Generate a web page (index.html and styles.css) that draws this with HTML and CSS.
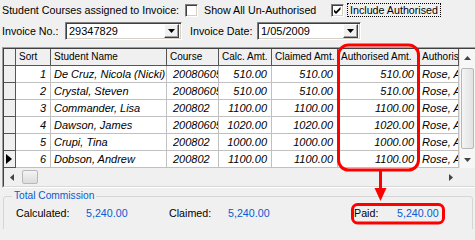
FILE: index.html
```html
<!DOCTYPE html>
<html>
<head>
<meta charset="utf-8">
<title>Student Courses</title>
<link rel="stylesheet" href="styles.css">
</head>
<body>
<div class="row1">
  <span class="title">Student Courses assigned to Invoice:</span>
  <span class="chk"></span>
  <span class="chklbl">Show All Un-Authorised</span>
  <span class="chk"><svg width="11" height="11" viewBox="0 0 11 11"><polygon points="2,4.5 4,6.5 8.5,2 8.5,4.5 4,9 2,7" fill="#000"/></svg></span>
  <span class="focus">Include Authorised</span>
</div>
<div class="row2">
  <span class="lbl lbl1">Invoice No.:</span>
  <span class="combo combo1"><span class="cval">29347829</span><span class="cbtn"><svg width="7" height="4" viewBox="0 0 7 4"><polygon points="0,0 7,0 3.5,4" fill="#000"/></svg></span></span>
  <span class="lbl lbl2">Invoice Date:</span>
  <span class="combo combo2"><span class="cval">1/05/2009</span><span class="cbtn"><svg width="7" height="4" viewBox="0 0 7 4"><polygon points="0,0 7,0 3.5,4" fill="#000"/></svg></span></span>
</div>
<div class="grid">
  <div class="gin">
    <div class="gmain">
      <div class="cells">
        <div class="hd rhh"></div><div class="hd">Sort</div><div class="hd">Student Name</div><div class="hd">Course</div><div class="hd">Calc. Amt.</div><div class="hd">Claimed Amt.</div><div class="hd">Authorised Amt.</div><div class="hd">Authorised By</div>

        <div class="rh"></div><div class="c r">1</div><div class="c l">De Cruz, Nicola (Nicki)</div><div class="c crs">20080605</div><div class="c r">510.00</div><div class="c r">510.00</div><div class="c r">510.00</div><div class="c l">Rose, Anne</div>
        <div class="rh"></div><div class="c r">2</div><div class="c l">Crystal, Steven</div><div class="c crs">20080605</div><div class="c r">510.00</div><div class="c r">510.00</div><div class="c r">510.00</div><div class="c l">Rose, Anne</div>
        <div class="rh"></div><div class="c r">3</div><div class="c l">Commander, Lisa</div><div class="c crs">200802</div><div class="c r">1100.00</div><div class="c r">1100.00</div><div class="c r">1100.00</div><div class="c l">Rose, Anne</div>
        <div class="rh"></div><div class="c r">4</div><div class="c l">Dawson, James</div><div class="c crs">20080605</div><div class="c r">1020.00</div><div class="c r">1020.00</div><div class="c r">1020.00</div><div class="c l">Rose, Anne</div>
        <div class="rh"></div><div class="c r">5</div><div class="c l">Crupi, Tina</div><div class="c crs">200802</div><div class="c r">1000.00</div><div class="c r">1000.00</div><div class="c r">1000.00</div><div class="c l">Rose, Anne</div>
        <div class="rh cur"><svg width="6" height="10" viewBox="0 0 6 10"><polygon points="0,0 6,5 0,10" fill="#000"/></svg></div><div class="c r">6</div><div class="c l">Dobson, Andrew</div><div class="c crs">200802</div><div class="c r">1100.00</div><div class="c r">1100.00</div><div class="c r">1100.00</div><div class="c l">Rose, Anne</div>
      </div>
      <div class="vs">
        <div class="sbtn"><svg width="7" height="4" viewBox="0 0 7 4"><polygon points="3.5,0 7,4 0,4" fill="#444"/></svg></div>
        <div class="vthumb"></div>
        <div class="sbtn"><svg width="7" height="4" viewBox="0 0 7 4"><polygon points="0,0 7,0 3.5,4" fill="#444"/></svg></div>
      </div>
    </div>
    <div class="hsrow">
      <div class="hs">
        <div class="hbtn"><svg width="4" height="7" viewBox="0 0 4 7"><polygon points="4,0 4,7 0,3.5" fill="#444"/></svg></div>
        <div class="hthumb"></div>
        <div class="htrack"></div>
        <div class="hbtn"><svg width="4" height="7" viewBox="0 0 4 7"><polygon points="0,0 4,3.5 0,7" fill="#444"/></svg></div>
      </div>
      <div class="corner"></div>
    </div>
  </div>
</div>
<fieldset class="totals">
  <legend>Total Commission</legend>
  <div class="tline">
    <span class="k k1">Calculated:</span><span class="v v1">5,240.00</span>
    <span class="k k2">Claimed:</span><span class="v v2">5,240.00</span>
    <span class="k k3">Paid:</span><span class="v v3">5,240.00</span>
  </div>
</fieldset>
<svg class="anno" width="475" height="229" viewBox="0 0 475 229">
  <rect x="338.5" y="45" width="80" height="125" rx="10" ry="10" fill="none" stroke="#f00" stroke-width="3"/>
  <line x1="380.5" y1="171" x2="380.5" y2="190" stroke="#f00" stroke-width="3"/>
  <polygon points="374.5,188 386.5,188 380.5,201" fill="#f00"/>
  <rect x="352.5" y="204.5" width="91" height="18.5" rx="5" ry="5" fill="none" stroke="#f00" stroke-width="3"/>
</svg>
</body>
</html>
```
FILE: styles.css
```css
* { box-sizing: border-box; }
html, body { margin: 0; padding: 0; }
body {
  width: 475px;
  height: 229px;
  overflow: hidden;
  position: relative;
  background: #f0f0f0;
  color: #000;
  font-family: "Liberation Sans", Arial, sans-serif;
  font-size: 10.7px;
}

/* top rows */
.row1 {
  display: flex;
  align-items: center;
  height: 20px;
  padding-left: 2px;
  white-space: nowrap;
}
.title { width: 183px; }
.chk {
  width: 13px;
  height: 13px;
  flex: none;
  background: #fff;
  border: 1px solid;
  border-color: #808080 #fff #fff #808080;
  box-shadow: inset 1px 1px 0 #404040, inset -1px -1px 0 #d4d0c8;
  display: flex;
  align-items: center;
  justify-content: center;
}
.chk svg { display: block; }
.chklbl { width: 127px; margin-left: 6px; }
.focus {
  margin-left: 3px;
  padding: 0 2px;
  height: 14px;
  line-height: 12px;
  border: 1px dotted #000;
}

.row2 {
  display: flex;
  align-items: center;
  height: 18px;
  margin-top: 2px;
  padding-left: 2px;
  white-space: nowrap;
}
.lbl1 { width: 63px; }
.lbl2 { width: 67px; margin-left: 8px; }
.combo {
  height: 18px;
  display: flex;
  align-items: center;
  justify-content: space-between;
  background: #fff;
  border: 1px solid;
  border-color: #808080 #fff #fff #808080;
  box-shadow: inset 1px 1px 0 #404040, inset -1px -1px 0 #d4d0c8;
  padding: 2px 2px 2px 3px;
}
.combo1 { width: 117px; }
.combo2 { width: 104px; }
.cval { font-size: 11px; }
.cbtn {
  width: 15px;
  height: 14px;
  background: #f0f0f0;
  border: 1px solid;
  border-color: #fff #404040 #404040 #fff;
  box-shadow: inset -1px -1px 0 #a0a0a0;
  display: flex;
  align-items: center;
  justify-content: center;
}
.cbtn svg { display: block; }

/* grid */
.grid {
  margin: 7px 0 0 2px;
  width: 473px;
  border-top: 1px solid #a0a0a0;
  border-left: 1px solid #a0a0a0;
  border-bottom: 1px solid #fff;
}
.gin {
  border-top: 1px solid #404040;
  border-left: 1px solid #404040;
  border-bottom: 1px solid #d8d8d8;
}
.gmain { display: flex; }
.cells {
  width: 455px;
  display: grid;
  grid-template-columns: 12px 35px 116px 52px 53px 66px 81px 40px;
  grid-auto-rows: 17px;
}
.hd {
  background: #f0f0f0;
  border-right: 1px solid #555;
  border-bottom: 1px solid #555;
  padding-left: 3px;
  font-size: 10px;
  line-height: 16px;
  white-space: nowrap;
  overflow: hidden;
}
.rh {
  background: #f0f0f0;
  border-right: 1px solid #555;
  border-bottom: 1px solid #555;
  display: flex;
  align-items: center;
  padding-left: 2px;
}
.rh svg { display: block; }
.c {
  background: #fff;
  border-right: 1px solid #c0c0c0;
  border-bottom: 1px solid #c0c0c0;
  font-style: italic;
  font-size: 11px;
  line-height: 16px;
  white-space: nowrap;
  overflow: hidden;
}
.c.r { text-align: right; padding-right: 4px; }
.c.l { padding-left: 3px; }
.c.crs { padding-left: 6px; }

.vs {
  width: 16px;
  display: flex;
  flex-direction: column;
  background: #f7f7f7;
  border-left: 1px solid #e4e4e4;
}
.sbtn {
  height: 17px;
  display: flex;
  align-items: center;
  justify-content: center;
}
.sbtn svg, .hbtn svg { display: block; }
.vthumb {
  flex: 1;
  margin: 2px 1px;
  border: 1px solid #b8b8b8;
  border-radius: 2px;
  background: linear-gradient(to right, #f4f4f4, #e2e2e2);
}
.hsrow { display: flex; height: 18px; }
.hs {
  width: 455px;
  display: flex;
  background: #f0f0f0;
}
.hbtn {
  width: 16px;
  display: flex;
  align-items: center;
  justify-content: center;
}
.hthumb {
  width: 16px;
  margin: 2px 0 2px 2px;
  border: 1px solid #b8b8b8;
  border-radius: 2px;
  background: linear-gradient(#f4f4f4, #dcdcdc);
}
.htrack { flex: 1; }
.corner { width: 16px; background: #f0f0f0; }

/* totals */
.totals {
  margin: 2px 2px 0 3px;
  padding: 4px 8px 8px 8px;
  border: 1px solid #d5d5d5;
  border-radius: 3px;
  height: 42px;
  min-width: 0;
}
.totals legend {
  color: #0a5ad0;
  padding: 0 2px;
  font-size: 10.2px;
  line-height: 12px;
}
.tline {
  display: flex;
  height: 14px;
  line-height: 14px;
  margin-left: 4px;
  white-space: nowrap;
}
.v { color: #0a5ad0; }
.k1 { width: 70px; }
.v1 { width: 83px; }
.k2 { width: 59px; }
.v2 { width: 126px; }
.k3 { width: 43px; }

.anno {
  position: absolute;
  left: 0;
  top: 0;
  pointer-events: none;
}
```
